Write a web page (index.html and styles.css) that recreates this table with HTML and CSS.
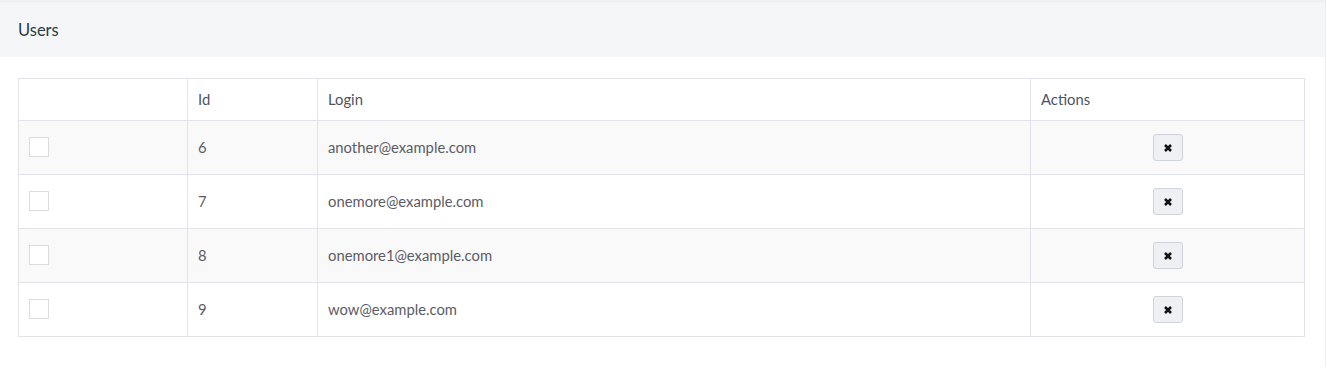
FILE: index.html
```html
<!DOCTYPE html>
<html>
<head>
<meta charset="utf-8">
<link rel="stylesheet" href="styles.css">
</head>
<body>
<div class="card">
  <div class="card-header">Users</div>
  <div class="card-body">
    <table class="grid">
      <thead>
        <tr><th class="c-sel"></th><th class="c-id">Id</th><th class="c-login">Login</th><th class="c-act">Actions</th></tr>
      </thead>
      <tbody>
        <tr><td><span class="check"></span></td><td>6</td><td>another@example.com</td><td class="act"><button class="btn"><svg viewBox="0 0 10 10" width="10" height="10"><path d="M2 2 L8 8 M8 2 L2 8" stroke="#111" stroke-width="2.6" stroke-linecap="butt"/></svg></button></td></tr>
        <tr><td><span class="check"></span></td><td>7</td><td>onemore@example.com</td><td class="act"><button class="btn"><svg viewBox="0 0 10 10" width="10" height="10"><path d="M2 2 L8 8 M8 2 L2 8" stroke="#111" stroke-width="2.6" stroke-linecap="butt"/></svg></button></td></tr>
        <tr><td><span class="check"></span></td><td>8</td><td>onemore1@example.com</td><td class="act"><button class="btn"><svg viewBox="0 0 10 10" width="10" height="10"><path d="M2 2 L8 8 M8 2 L2 8" stroke="#111" stroke-width="2.6" stroke-linecap="butt"/></svg></button></td></tr>
        <tr><td><span class="check"></span></td><td>9</td><td>wow@example.com</td><td class="act"><button class="btn"><svg viewBox="0 0 10 10" width="10" height="10"><path d="M2 2 L8 8 M8 2 L2 8" stroke="#111" stroke-width="2.6" stroke-linecap="butt"/></svg></button></td></tr>
      </tbody>
    </table>
  </div>
</div>
</body>
</html>
```
FILE: styles.css
```css
html, body { margin: 0; padding: 0; background: #fff; }
body { font-family: "Lato", "Open Sans", sans-serif; color: #5c5c66; font-size: 14.8px; }
.card { width: 1326px; border-top: 2px solid #eef0f3; border-right: 1px solid #eceef2; min-height: 367px; box-sizing: border-box; }
.card-header { height: 55px; background: #f4f6f8; padding: 1px 18px 0 18px; box-sizing: border-box; display: flex; align-items: center; font-size: 16.5px; color: #2c3a48; }
.card-body { padding: 21px 18px 0 18px; }
.grid { width: 1287px; border-collapse: collapse; table-layout: fixed; }
.grid th, .grid td { border: 1px solid #e2e3ea; padding: 0 10px; text-align: left; font-weight: normal; }
.grid th { height: 40px; padding-bottom: 1px; color: #4f5360; }
.grid td { height: 51px; padding-bottom: 2px; }
.c-sel { width: 148px; }
.c-id { width: 109px; }
.c-login { width: 692px; }
.grid tbody tr:nth-child(odd) td { background: #f9f9f9; }
.check { display: block; width: 18px; height: 18px; border: 1px solid #dcdcdc; background: #fff; margin-top: 1px; }
.grid td.act { text-align: center; padding-bottom: 0; height: 53px; }
.btn { width: 30px; height: 27px; border: 1px solid #cfd4dc; border-radius: 3px; background: #eef0f4; display: inline-flex; align-items: center; justify-content: center; padding: 0; margin: 0; vertical-align: middle; }
.btn svg { display: block; }
```
